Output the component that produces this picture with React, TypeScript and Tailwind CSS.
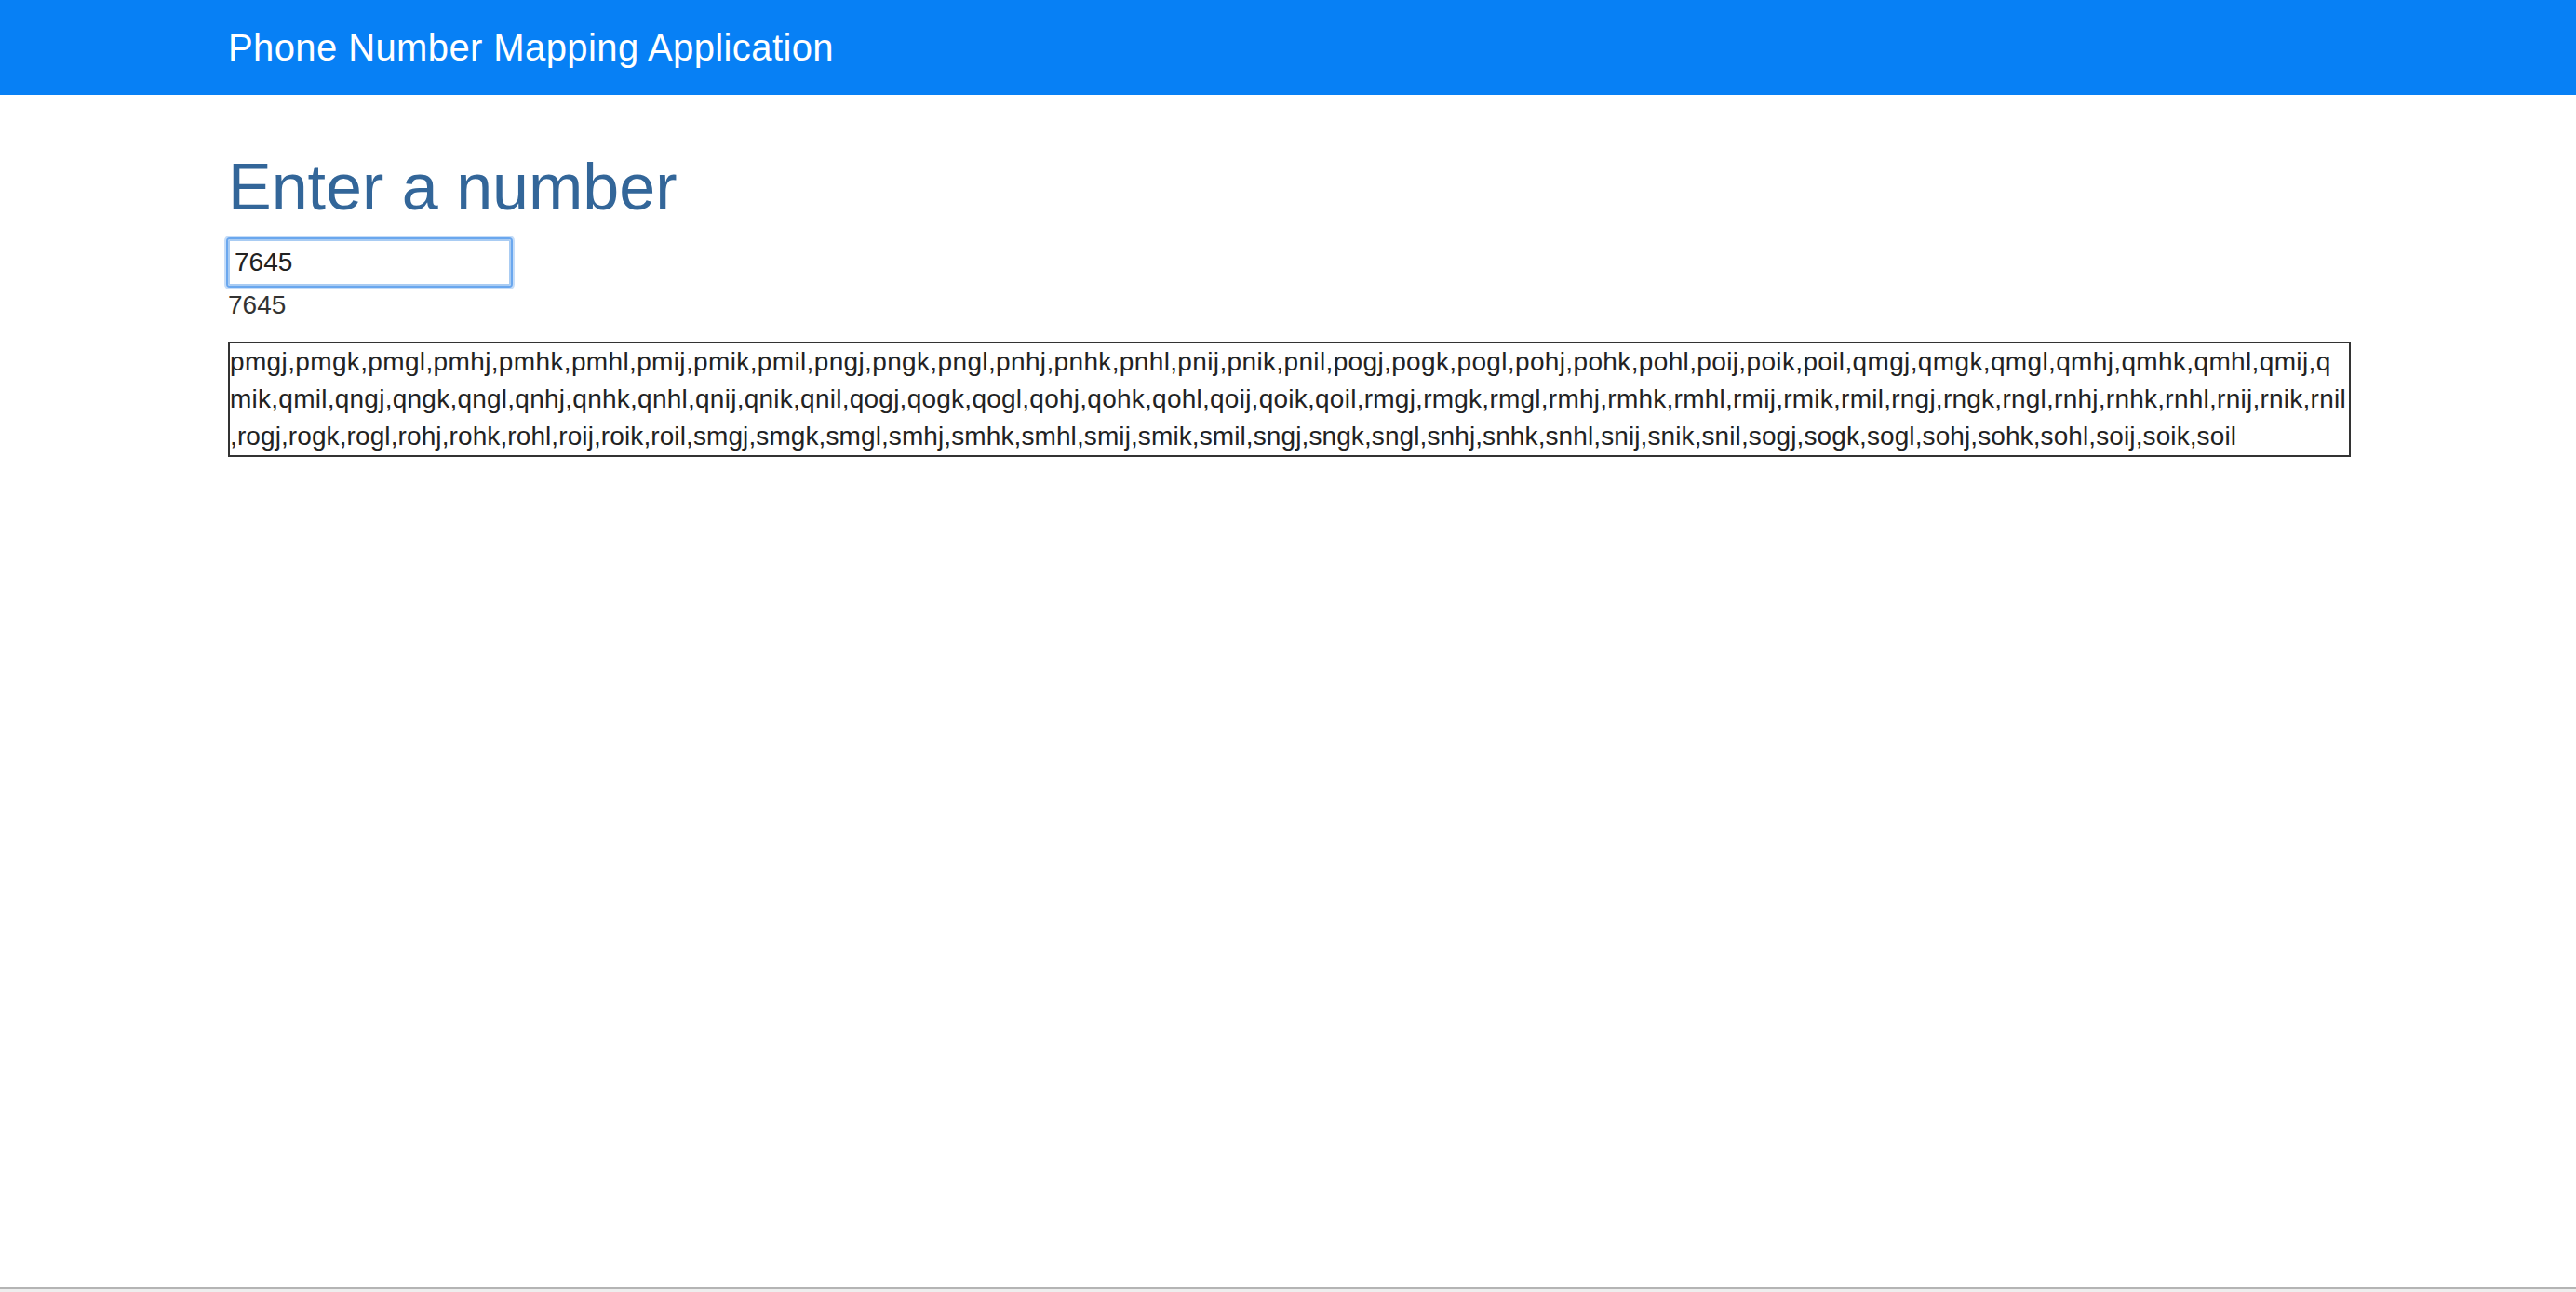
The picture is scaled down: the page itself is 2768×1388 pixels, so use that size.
import React, { useState } from 'react';

const KEYPAD: Record<string, string> = {
  '2': 'abc',
  '3': 'def',
  '4': 'ghi',
  '5': 'jkl',
  '6': 'mno',
  '7': 'pqrs',
  '8': 'tuv',
  '9': 'wxyz',
};

const LINE_BREAKS = [171, 359];
const LINE_TRACKING = ['tracking-[0.36px]', 'tracking-[0.25px]', 'tracking-[0.1px]'];

function combos(num: string): string[] {
  let out: string[] = [''];
  for (const d of num) {
    const letters = KEYPAD[d];
    if (!letters) continue;
    const next: string[] = [];
    for (const prefix of out) {
      for (const ch of letters) next.push(prefix + ch);
    }
    out = next;
  }
  return out.filter((s) => s.length > 0);
}

function splitLines(text: string): string[] {
  const lines: string[] = [];
  let start = 0;
  for (const b of LINE_BREAKS) {
    if (b >= text.length) break;
    lines.push(text.slice(start, b));
    start = b;
  }
  lines.push(text.slice(start));
  return lines;
}

export default function App() {
  const [value, setValue] = useState('7645');
  const lines = splitLines(combos(value).join(','));

  return (
    <div className="min-h-screen flex flex-col bg-white text-[#333] font-['Liberation_Sans',Arial,sans-serif]">
      <nav className="h-[102px] bg-[#0780f5] flex items-center">
        <div className="pl-[245px]">
          <span className="text-white text-[40px] tracking-[0.4px]">Phone Number Mapping Application</span>
        </div>
      </nav>

      <main className="flex-1 px-[245px] pr-[242px]">
        <h1 className="mt-[64px] text-[70px] leading-[70px] text-[#336699]">Enter a number</h1>
        <div className="mt-[21px]">
          <input
            autoFocus
            value={value}
            onChange={(e) => setValue(e.target.value)}
            className="w-[304px] h-[50px] px-[5px] text-[28px] text-[#222] border-2 border-[#a9ccf3] outline-none shadow-[0_0_0_2px_#6aa7ee,0_0_0_4px_#c6ddf8] rounded-[2px]"
          />
        </div>
        <p className="mt-[1px] text-[28px] leading-[40px]">{value}</p>
        <div className="mt-[19px] border-2 border-[#333] text-[28px] leading-[40px] text-[#222] break-all">
          {lines.map((line, i) => (
            <div key={i} className={LINE_TRACKING[i] ?? 'tracking-[0.2px]'}>
              {line}
            </div>
          ))}
        </div>
      </main>

      <div className="h-[5px] border-t-2 border-[#b4b4b4] bg-[#eeeeee]" />
    </div>
  );
}
